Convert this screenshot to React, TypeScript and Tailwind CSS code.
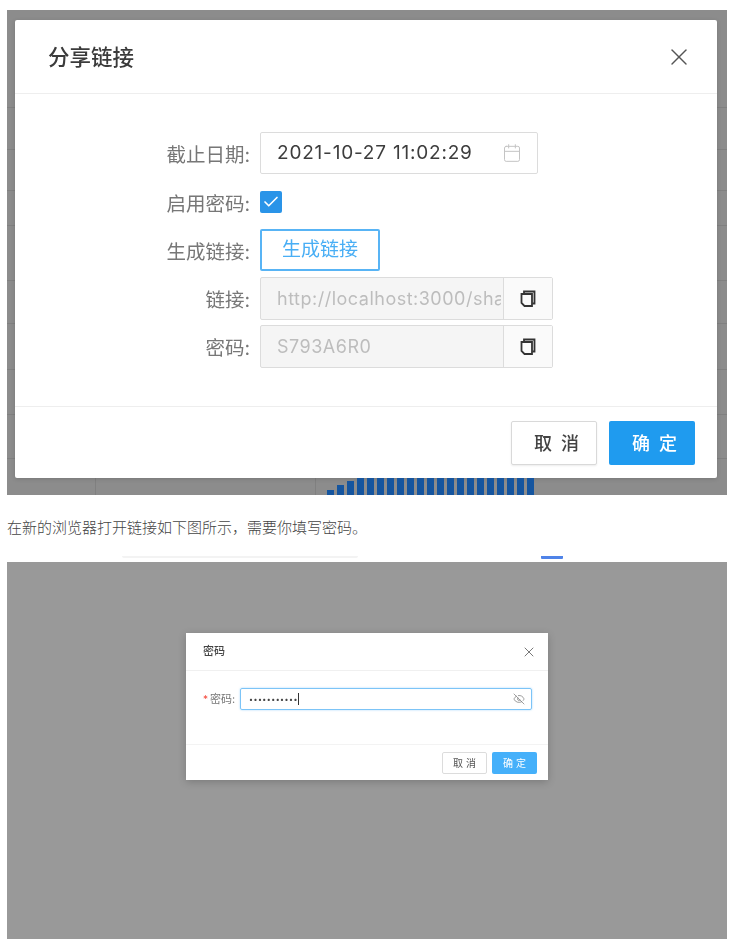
import { Calendar, Check, EyeOff, X } from "lucide-react";

const bars = [5, 10, 14, 17, 17, 17, 17, 17, 17, 17, 17, 17, 17, 17, 17, 17, 17, 17, 17, 17, 17];
const gridRows = [97, 139, 180, 215, 270, 313, 359, 404, 448];
const gridCols = [88, 308];
const fontCls = "font-['Inter','Noto_Sans_CJK_SC',sans-serif]";

function CopyIcon() {
  return (
    <svg width="16" height="18" viewBox="0 0 16 18" fill="none" stroke="#333" strokeWidth="1.8">
      <path d="M4 3.5V1.5H14.5V13.5H12.5" />
      <path d="M1.5 4H12V16H4.5L1.5 13Z" />
    </svg>
  );
}

function Label({ children }: { children: string }) {
  return <div className="w-[245px] shrink-0 pr-[10px] pt-[3px] text-right text-[19.5px] leading-[24px] text-[#777]">{children}</div>;
}

function DisabledRow({ label, value }: { label: string; value: string }) {
  return (
    <div className="flex h-[43px] items-center">
      <Label>{label}</Label>
      <div className="flex h-[43px] w-[293px] rounded-[2px] border border-[#dcdcdc] bg-[#f5f5f5]">
        <div className="w-[243px] border-r border-[#dcdcdc] pl-[16px] pr-[2px] text-[18px] leading-[41px] tracking-[0.5px] text-[#bdbdbd]">
          <span className="block overflow-hidden whitespace-nowrap">{value}</span>
        </div>
        <div className="flex flex-1 items-center justify-center bg-[#fafafa]">
          <CopyIcon />
        </div>
      </div>
    </div>
  );
}

export default function App() {
  return (
    <div className={`h-[950px] w-[737px] overflow-hidden bg-white pl-[7px] pt-[10px] ${fontCls}`}>
      <section className="relative flex h-[485px] w-[720px] flex-col items-start bg-[#8c8c8c] pl-[8px] pt-[10px]">
        {gridRows.map((y) => (
          <div key={y} className="absolute left-0 h-px w-full bg-[#808080]" style={{ top: y }} />
        ))}
        {gridCols.map((x) => (
          <div key={x} className="absolute bottom-0 h-[20px] w-px bg-[#808080]" style={{ left: x }} />
        ))}
        <div className="relative flex h-[458px] w-[702px] flex-col rounded-[2px] bg-white shadow-[0_1px_4px_rgba(0,0,0,0.15)]">
          <div className="flex h-full flex-col blur-[0.45px]">
            <header className="flex h-[74px] shrink-0 items-center justify-between border-b border-[#eeeeee] pl-[33px] pr-[24px] pt-px">
              <h2 className="text-[21.5px] font-medium leading-[28px] text-[#3b3b3b]">分享链接</h2>
              <X size={28} strokeWidth={1.2} color="#555" />
            </header>
            <div className="flex flex-1 flex-col pt-[38px]">
              <div className="flex h-[42px] items-center">
                <Label>截止日期:</Label>
                <div className="flex h-[42px] w-[278px] items-center justify-between rounded-[2px] border border-[#dcdcdc] pl-[16px] pr-[15px]">
                  <span className="text-[19px] tracking-[0.8px] text-[#3d3d3d]">2021-10-27 11:02:29</span>
                  <Calendar size={20} strokeWidth={1.2} color="#c4c4c4" />
                </div>
              </div>
              <div className="mt-[7px] flex h-[42px] items-center">
                <Label>启用密码:</Label>
                <div className="flex h-[22px] w-[22px] items-center justify-center rounded-[2px] bg-[#2a94e8]">
                  <Check size={18} strokeWidth={2.2} color="white" />
                </div>
              </div>
              <div className="mt-[6px] flex h-[42px] items-center">
                <Label>生成链接:</Label>
                <button className="h-[42px] w-[120px] rounded-[2px] border-2 border-[#58b4f5] text-[19px] text-[#48aef5]">生成链接</button>
              </div>
              <div className="mt-[6px] flex flex-col gap-[5px]">
                <DisabledRow label="链接:" value="http://localhost:3000/sha" />
                <DisabledRow label="密码:" value="S793A6R0" />
              </div>
            </div>
            <footer className="flex h-[72px] shrink-0 items-start justify-end gap-[12px] border-t border-[#eeeeee] pr-[22px] pt-[14px]">
              <button className="h-[44px] w-[86px] rounded-[2px] border border-[#d9d9d9] bg-white pl-[14px] text-[18px] font-medium tracking-[9px] text-[#444] shadow-[0_1px_2px_rgba(0,0,0,0.08)]">取消</button>
              <button className="h-[44px] w-[86px] rounded-[2px] bg-[#1f9bef] pl-[14px] text-[18px] font-medium tracking-[9px] text-white">确定</button>
            </footer>
          </div>
        </div>
        <div className="relative ml-[312px] flex h-[17px] items-end gap-[3px]">
          {bars.map((h, i) => (
            <div key={i} className="w-[7px] bg-[#15559f]" style={{ height: h }} />
          ))}
        </div>
      </section>

      <p className="mt-[23px] text-[15px] font-light leading-[20px] text-[#444]">在新的浏览器打开链接如下图所示，需要你填写密码。</p>

      <div className="mt-[8px] flex h-[16px] items-start pt-[10px]">
        <div className="ml-[115px] h-[2px] w-[236px] rounded-b-[2px] bg-[#f3f3f3]" />
        <div className="ml-[183px] h-[3px] w-[22px] rounded-b-[1px] bg-[#4f83e8]" />
      </div>

      <section className="flex h-[377px] w-[720px] items-start justify-center bg-[#999999] pt-[71px]">
        <div className="flex h-[147px] w-[362px] flex-col bg-white shadow-[0_2px_8px_rgba(0,0,0,0.2)]">
          <div className="flex h-full flex-col blur-[0.35px]">
            <header className="flex h-[38px] shrink-0 items-center justify-between border-b border-[#f0f0f0] pl-[17px] pr-[11px]">
              <h3 className="text-[11px] font-medium text-[#444]">密码</h3>
              <X size={16} strokeWidth={1.2} color="#555" />
            </header>
            <div className="flex h-[73px] shrink-0 items-start pl-[17px] pt-[17px]">
              <div className="flex h-[22px] w-[37px] shrink-0 items-center text-[11px] text-[#777]">
                <span className="mr-[2px] text-[10px] text-[#f5483b]">*</span>
                <span className="whitespace-nowrap">密码:</span>
              </div>
              <div className="flex h-[22px] w-[292px] items-center justify-between rounded-[2px] border border-[#7cc4f7] pl-[8px] pr-[6px] shadow-[0_0_2px_rgba(90,180,245,0.6)]">
                <span className="flex items-center text-[7px] leading-none tracking-[0.5px] text-[#444]">
                  •••••••••••
                  <span className="h-[12px] w-px bg-[#333]" />
                </span>
                <EyeOff size={12} strokeWidth={1.4} color="#777" />
              </div>
            </div>
            <footer className="flex flex-1 items-start justify-end gap-[5px] border-t border-[#f3f3f3] pr-[11px] pt-[7px]">
              <button className="h-[22px] w-[45px] rounded-[2px] border border-[#dcdcdc] pl-[3px] text-[10px] tracking-[3px] text-[#555]">取消</button>
              <button className="h-[22px] w-[45px] rounded-[2px] bg-[#45b0fa] pl-[3px] text-[10px] tracking-[3px] text-white">确定</button>
            </footer>
          </div>
        </div>
      </section>
    </div>
  );
}
